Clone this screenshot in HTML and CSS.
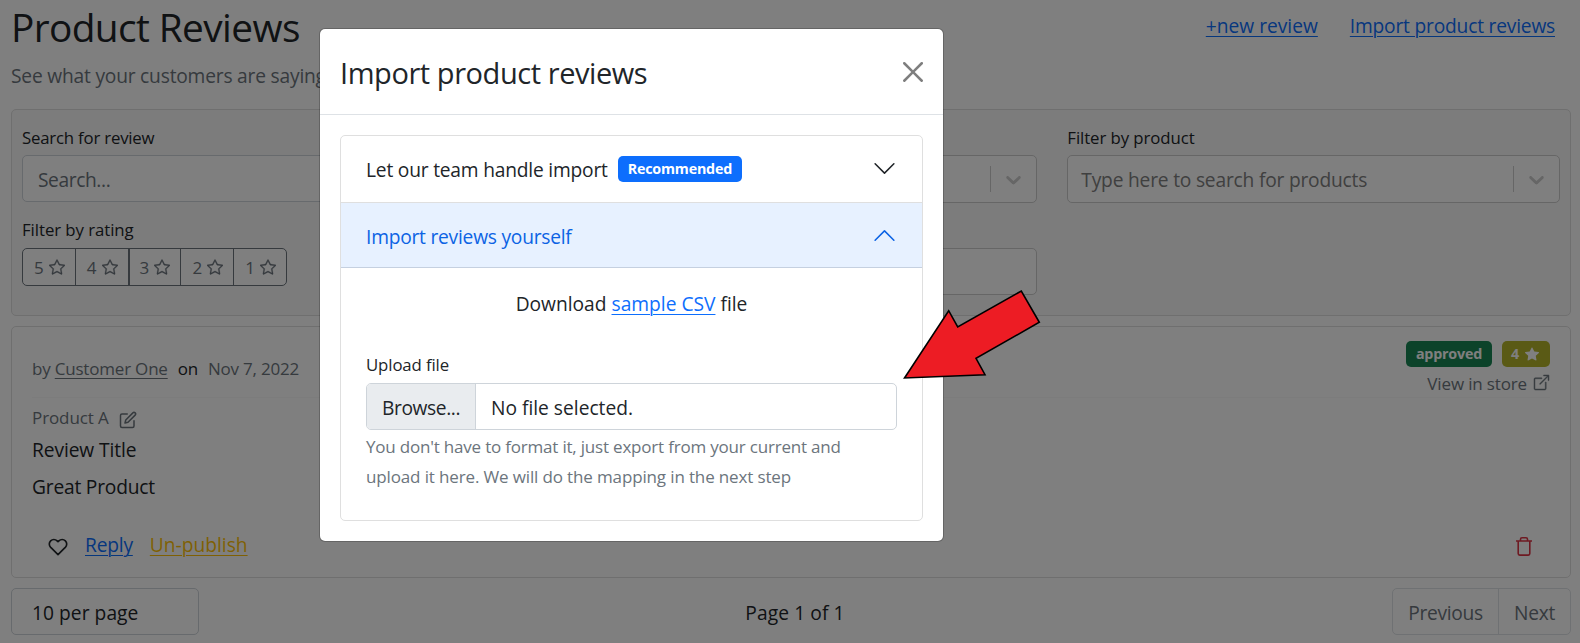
FILE: index.html
```html
<!DOCTYPE html>
<html lang="en">
<head>
<meta charset="utf-8">
<title>Product Reviews</title>
<link rel="stylesheet" href="styles.css">
</head>
<body>
<svg width="0" height="0" class="defs">
  <symbol id="star" viewBox="0 0 16 16"><path d="M2.866 14.85c-.078.444.36.791.746.593l4.39-2.256 4.389 2.256c.386.198.824-.149.746-.592l-.83-4.73 3.522-3.356c.33-.314.16-.888-.282-.95l-4.898-.696L8.465.792a.513.513 0 0 0-.927 0L5.354 5.12l-4.898.696c-.441.062-.612.636-.283.95l3.523 3.356-.83 4.73zm4.905-2.767-3.686 1.894.694-3.957a.565.565 0 0 0-.163-.505L1.71 6.745l4.052-.576a.525.525 0 0 0 .393-.288L8 2.223l1.847 3.658a.525.525 0 0 0 .393.288l4.052.575-2.906 2.77a.565.565 0 0 0-.163.506l.694 3.957-3.686-1.894a.503.503 0 0 0-.461 0z"/></symbol>
  <symbol id="down" viewBox="0 0 20 20"><path d="M4.516 7.548c0.436-0.446 1.043-0.481 1.576 0l3.908 3.747 3.908-3.747c0.533-0.481 1.141-0.446 1.574 0 0.436 0.445 0.408 1.197 0 1.615-0.406 0.418-4.695 4.502-4.695 4.502-0.217 0.223-0.502 0.335-0.787 0.335s-0.57-0.112-0.789-0.335c0 0-4.287-4.084-4.695-4.502s-0.436-1.17 0-1.615z"/></symbol>
</svg>

<main class="page">
  <header class="top">
    <div>
      <h1 class="title">Product Reviews</h1>
      <p class="subtitle">See what your customers are saying</p>
    </div>
    <nav class="links">
      <a href="#" class="link new">+new review</a>
      <a href="#" class="link import">Import product reviews</a>
    </nav>
  </header>

  <section class="filters">
    <div class="field">
      <label class="label">Search for review</label>
      <div class="input search">Search...</div>
    </div>
    <div class="field">
      <label class="label"></label>
      <div class="select"><span></span><i class="sep"></i><svg class="caret"><use href="#down"/></svg></div>
    </div>
    <div class="field">
      <label class="label product">Filter by product</label>
      <div class="select"><span class="hint">Type here to search for products</span><i class="sep"></i><svg class="caret"><use href="#down"/></svg></div>
    </div>
    <div class="field">
      <label class="label rating">Filter by rating</label>
      <div class="stars">
        <button class="star">5 <svg><use href="#star"/></svg></button>
        <button class="star">4 <svg><use href="#star"/></svg></button>
        <button class="star">3 <svg><use href="#star"/></svg></button>
        <button class="star">2 <svg><use href="#star"/></svg></button>
        <button class="star">1 <svg><use href="#star"/></svg></button>
      </div>
    </div>
    <div class="field">
      <label class="label"></label>
      <div class="input plain"></div>
    </div>
  </section>

  <article class="review">
    <div class="review-head">
      <div class="by">by <a class="customer">Customer One</a><span class="on">on</span><span class="date">Nov 7, 2022</span></div>
      <div class="meta">
        <div class="badges">
          <span class="badge green">approved</span>
          <span class="badge olive">4 <svg viewBox="0 0 16 16"><path d="M3.612 15.443c-.386.198-.824-.149-.746-.592l.83-4.73L.173 6.765c-.329-.314-.158-.888.283-.95l4.898-.696L7.538.792c.197-.39.73-.39.927 0l2.184 4.327 4.898.696c.441.062.612.636.282.95l-3.522 3.356.83 4.73c.078.443-.36.79-.746.592L8 13.187l-4.389 2.256z"/></svg></span>
        </div>
        <div class="view">View in store <svg viewBox="0 0 16 16"><path fill-rule="evenodd" d="M8.636 3.5a.5.5 0 0 0-.5-.5H1.5A1.5 1.5 0 0 0 0 4.5v10A1.5 1.5 0 0 0 1.5 16h10a1.5 1.5 0 0 0 1.5-1.5V7.864a.5.5 0 0 0-1 0V14.5a.5.5 0 0 1-.5.5h-10a.5.5 0 0 1-.5-.5v-10a.5.5 0 0 1 .5-.5h6.636a.5.5 0 0 0 .5-.5z"/><path fill-rule="evenodd" d="M16 .5a.5.5 0 0 0-.5-.5h-5a.5.5 0 0 0 0 1h3.793L6.146 9.146a.5.5 0 1 0 .708.708L15 1.707V5.5a.5.5 0 0 0 1 0v-5z"/></svg></div>
      </div>
    </div>
    <div class="product-row"><span>Product A</span><svg viewBox="0 0 24 24"><path d="M11 4H4a2 2 0 0 0-2 2v14a2 2 0 0 0 2 2h14a2 2 0 0 0 2-2v-7"/><path d="M18.5 2.5a2.12 2.12 0 0 1 3 3L12 15l-4 1 1-4z"/></svg></div>
    <p class="review-title">Review Title</p>
    <p class="review-text">Great Product</p>
    <div class="actions">
      <svg class="heart" viewBox="0 0 24 24"><path d="M20.84 4.61a5.5 5.5 0 0 0-7.78 0L12 5.67l-1.06-1.06a5.5 5.5 0 0 0-7.78 7.78l1.06 1.06L12 21.23l7.78-7.78 1.06-1.06a5.5 5.5 0 0 0 0-7.78z"/></svg>
      <a href="#" class="link reply">Reply</a>
      <a href="#" class="link unpublish">Un-publish</a>
      <svg class="trash" viewBox="0 0 16 19"><path d="M0 4h16M2.2 4v12.6q0 1.5 1.5 1.5h8.6q1.5 0 1.5-1.5V4M4.5 4V2.3Q4.5.8 6 .8h4q1.500 0 1.500 1.500V4"/></svg>
    </div>
  </article>

  <footer class="pager">
    <div class="per-page">10 per page</div>
    <div class="count">Page 1 of 1</div>
    <div class="steps"><span class="step prev">Previous</span><span class="step next">Next</span></div>
  </footer>
</main>

<div class="backdrop"></div>

<div class="modal">
  <div class="modal-head">
    <h2 class="modal-title">Import product reviews</h2>
    <svg class="close" viewBox="0 0 16 16"><path d="M.293.293a1 1 0 0 1 1.414 0L8 6.586 14.293.293a1 1 0 1 1 1.414 1.414L9.414 8l6.293 6.293a1 1 0 0 1-1.414 1.414L8 9.414l-6.293 6.293a1 1 0 0 1-1.414-1.414L6.586 8 .293 1.707a1 1 0 0 1 0-1.414z"/></svg>
  </div>
  <div class="accordion">
    <div class="acc-row">
      <span class="acc-team">Let our team handle import</span>
      <span class="badge blue">Recommended</span>
      <svg class="chev" viewBox="0 0 16 16"><path fill-rule="evenodd" d="M1.646 4.646a.5.5 0 0 1 .708 0L8 10.293l5.646-5.647a.5.5 0 0 1 .708.708l-6 6a.5.5 0 0 1-.708 0l-6-6a.5.5 0 0 1 0-.708z"/></svg>
    </div>
    <div class="acc-row open">
      <span class="acc-self">Import reviews yourself</span>
      <svg class="chev up" viewBox="0 0 16 16"><path fill-rule="evenodd" d="M1.646 4.646a.5.5 0 0 1 .708 0L8 10.293l5.646-5.647a.5.5 0 0 1 .708.708l-6 6a.5.5 0 0 1-.708 0l-6-6a.5.5 0 0 1 0-.708z"/></svg>
    </div>
    <div class="acc-body">
      <p class="download">Download <a href="#" class="link">sample CSV</a> file</p>
      <label class="label upload">Upload file</label>
      <div class="file"><span class="browse">Browse...</span><span class="no-file">No file selected.</span></div>
      <p class="help"><span class="help-a">You don't have to format it, just export from your current and</span><br><span class="help-b">upload it here. We will do the mapping in the next step</span></p>
    </div>
  </div>
</div>

<svg class="arrow" viewBox="898 286 146 98"><path d="M904.500 378 948.700 310.700 957.700 327 1021.300 291 1039.300 322.300 976 358.300 985 374.700Z"/></svg>
</body>
</html>
```
FILE: styles.css
```css
* { box-sizing: border-box; }
body {
  margin: 0;
  width: 1580px;
  height: 643px;
  overflow: hidden;
  position: relative;
  background: #fff;
  color: #212529;
  font: 19.2px/30px "Open Sans", "Noto Sans", sans-serif;
  letter-spacing: -0.2px;
}
h1, h2, p { margin: 0; font-weight: 400; }
svg { fill: currentColor; flex: none; }
.defs { position: absolute; }
.link { color: #0d6efd; text-decoration: underline; text-decoration-thickness: 1px; text-underline-offset: 3px; }

.page { padding: 3px 9px 0 11px; }
.top { display: flex; justify-content: space-between; white-space: nowrap; }
.title { font-size: 38.8px; line-height: 48px; margin-bottom: 10px; letter-spacing: -0.6px; }
.subtitle { color: #6c757d; }
.links { display: flex; gap: 32px; padding: 8px 16px 0 0; }
.new { letter-spacing: 0; }

.filters {
  display: grid;
  grid-template-columns: repeat(3, 1fr);
  gap: 15px 30px;
  height: 207px;
  margin-top: 18px;
  padding: 15px 10px 20px;
  background: #f8f8f8;
  border: 1px solid #dfdfdf;
  border-radius: 5px;
}
.label { display: block; height: 25px; margin-bottom: 5px; font-size: 16.8px; line-height: 25px; }
.product { letter-spacing: -0.08px; }
.rating { line-height: 23px; letter-spacing: -0.06px; }
.input { height: 47px; padding: 9px 15px; line-height: 29px; border: 1px solid #ced4da; border-radius: 5px; background: #fff; color: #6c757d; }
.search { letter-spacing: -0.4px; }
.plain { border-color: #ccc; }
.select { display: flex; align-items: center; height: 48px; padding: 0 10px 0 13px; border: 1px solid #ccc; border-radius: 5px; background: #fff; color: #ccc; }
.hint { color: #808080; padding-top: 1px; }
.sep { width: 1px; height: 26px; margin-left: auto; background: #ccc; }
.caret { width: 25px; height: 25px; margin-left: 10px; }

.stars { display: flex; width: 265px; height: 38px; border: 1px solid #6c757d; border-radius: 5px; background: #fff; overflow: hidden; }
.star { display: flex; flex: 1; align-items: center; justify-content: flex-start; gap: 5px; padding: 0 0 0 11px; border: 0; border-left: 1px solid #6c757d; background: none; color: #6c757d; font: 17px/25px "Open Sans", sans-serif; }
.star:first-child { border-left: 0; }
.star:nth-child(3) { border-left-width: 2px; padding-left: 10px; }
.star svg { width: 16px; height: 16px; margin-top: -1px; stroke: currentColor; stroke-width: .3; }

.review { height: 252px; margin-top: 10px; padding: 14px 20px 0; border: 1px solid #dfdfdf; border-radius: 5px; }
.review-head { display: flex; justify-content: space-between; height: 57px; border-bottom: 1px solid #f8f8f8; font-size: 17px; color: #6c757d; }
.by { line-height: 56px; white-space: nowrap; }
.customer { text-decoration: underline; text-decoration-thickness: 1px; text-underline-offset: 3px; }
.on { margin: 0 10px; color: #212529; }
.meta { display: flex; flex-direction: column; align-items: flex-end; gap: 4px; }
.badges { display: flex; gap: 10px; }
.badge { display: flex; align-items: center; height: 26px; padding: 0 10px; border-radius: 5px; color: #fff; font-size: 14.3px; font-weight: 700; line-height: 28px; letter-spacing: -0.2px; }
.green { background: #198754; }
.olive { gap: 6px; padding: 0 11px 0 9px; background: #b4b42a; }
.olive svg { width: 14px; height: 14px; }
.blue { background: #0d6efd; }
.view { display: flex; align-items: center; gap: 7px; line-height: 26px; letter-spacing: -0.15px; }
.view svg { width: 15px; height: 15px; margin: -3px 1px 0 0; stroke: currentColor; stroke-width: .5; overflow: visible; }
.product-row { display: flex; align-items: center; gap: 10px; margin-top: 7px; color: #6c757d; font-size: 17px; line-height: 26px; letter-spacing: -0.1px; }
.product-row svg { width: 18px; height: 18px; margin-top: 3px; }
.product-row svg, .heart, .trash { fill: none; stroke: currentColor; stroke-width: 2; stroke-linecap: round; stroke-linejoin: round; }
.review-title { margin-top: 4px; letter-spacing: -0.1px; }
.review-text { margin-top: 7px; }
.actions { display: flex; margin-top: 28px; padding: 0 18px 0 16px; }
.heart { width: 20px; height: 20px; margin: 7px 17px 0 0; }
.reply { margin-right: 17px; }
.unpublish { color: #ffc107; letter-spacing: 0; }
.trash { width: 16px; height: 19px; margin: 7px 0 0 auto; color: #dc3545; stroke-width: 1.6; stroke-linecap: butt; }

.pager { display: grid; grid-template-columns: 188px 1fr 180px; align-items: center; margin-top: 10px; }
.per-page, .steps { height: 47px; line-height: 48px; border: 1px solid #ced4da; border-radius: 5px; }
.per-page { padding-left: 20px; letter-spacing: 0.05px; }
.count { padding-top: 2px; text-align: center; letter-spacing: 0.1px; }
.steps { display: flex; width: 179px; justify-self: end; border-color: #dee2e6; color: #6c757d; letter-spacing: -0.3px; }
.step { flex: none; text-align: center; }
.prev { width: 106px; border-right: 1px solid #dee2e6; }
.next { width: 71px; }

.backdrop { position: absolute; inset: 0; background: rgba(0, 0, 0, .5); }

.modal { position: absolute; left: 319px; top: 28px; width: 625px; height: 514px; border: 1px solid rgba(0, 0, 0, .2); border-radius: 6px; background: #fff; background-clip: padding-box; }
.modal-head { display: flex; justify-content: space-between; height: 86px; padding: 23px 20px 0; border-bottom: 1px solid #dee2e6; }
.modal-title { font-size: 29px; line-height: 42px; white-space: nowrap; letter-spacing: -0.43px; }
.close { width: 20px; height: 20px; margin-top: 10px; opacity: .5; fill: #000; }
.accordion { height: 386px; margin: 20px; border: 1px solid #dfdfdf; border-radius: 5px; overflow: hidden; }
.acc-row { display: flex; align-items: center; height: 66px; padding: 0 25px; white-space: nowrap; }
.acc-team { padding-top: 2px; }
.acc-self { padding-top: 3px; letter-spacing: -0.23px; }
.acc-row .blue { margin-left: 10px; }
.chev { width: 25px; height: 25px; margin: -1px 0 0 auto; }
.open { height: 66px; border-top: 1px solid #dfdfdf; border-bottom: 1px solid #c5d0e0; background: #e7f1ff; color: #0c63e4; }
.up { margin-top: 1px; transform: rotate(180deg); }
.acc-body { padding: 21px 25px 0; }
.download { margin-bottom: 33px; text-align: center; letter-spacing: 0; }
.upload { margin-bottom: 6px; letter-spacing: -0.12px; }
.file { display: flex; height: 47px; border: 1px solid #ced4da; border-radius: 5px; line-height: 48px; overflow: hidden; white-space: nowrap; }
.browse { width: 109px; padding-left: 15px; background: #e9ecef; border-right: 1px solid #ced4da; letter-spacing: -0.4px; }
.no-file { padding-left: 15px; letter-spacing: 0; }
.help { margin-top: 2px; color: #6c757d; font-size: 17px; line-height: 30px; white-space: nowrap; }
.help-b { letter-spacing: -0.14px; }

.arrow { position: absolute; left: 898px; top: 286px; width: 146px; height: 98px; fill: #ed1c24; stroke: #000; stroke-width: 1.6; }
```
